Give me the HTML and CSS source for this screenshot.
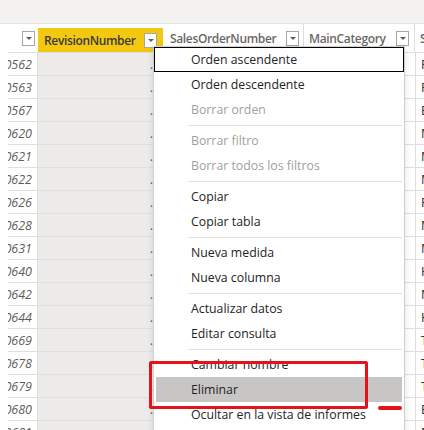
FILE: index.html
```html
<!DOCTYPE html>
<html lang="es">
<head>
<meta charset="utf-8">
<title>Tabla</title>
<link rel="stylesheet" href="styles.css">
</head>
<body>
<div class="top"></div>
<div class="sheet">
  <div class="table">
    <div class="row hdr">
      <div class="c c1"><span class="dd"></span></div>
      <div class="c c2 sel"><span class="hname">RevisionNumber</span><span class="dd"></span></div>
      <div class="c c3"><span class="hname">SalesOrderNumber</span><span class="dd"></span></div>
      <div class="c c4"><span class="hname">MainCategory</span><span class="dd"></span></div>
      <div class="c c5"><span class="hname">S</span></div>
    </div>
    <div class="row"><div class="c c1">50562</div><div class="c c2">.</div><div class="c c3"></div><div class="c c4"></div><div class="c c5">F</div></div>
    <div class="row"><div class="c c1">50563</div><div class="c c2">.</div><div class="c c3"></div><div class="c c4"></div><div class="c c5">F</div></div>
    <div class="row"><div class="c c1">50567</div><div class="c c2">.</div><div class="c c3"></div><div class="c c4"></div><div class="c c5">E</div></div>
    <div class="row"><div class="c c1">50620</div><div class="c c2">.</div><div class="c c3"></div><div class="c c4"></div><div class="c c5">M</div></div>
    <div class="row"><div class="c c1">50621</div><div class="c c2">.</div><div class="c c3"></div><div class="c c4"></div><div class="c c5">M</div></div>
    <div class="row"><div class="c c1">50622</div><div class="c c2">.</div><div class="c c3"></div><div class="c c4"></div><div class="c c5">M</div></div>
    <div class="row"><div class="c c1">50626</div><div class="c c2">.</div><div class="c c3"></div><div class="c c4"></div><div class="c c5">F</div></div>
    <div class="row"><div class="c c1">50628</div><div class="c c2">.</div><div class="c c3"></div><div class="c c4"></div><div class="c c5">M</div></div>
    <div class="row"><div class="c c1">50631</div><div class="c c2">.</div><div class="c c3"></div><div class="c c4"></div><div class="c c5">M</div></div>
    <div class="row"><div class="c c1">50640</div><div class="c c2">.</div><div class="c c3"></div><div class="c c4"></div><div class="c c5">H</div></div>
    <div class="row"><div class="c c1">50642</div><div class="c c2">.</div><div class="c c3"></div><div class="c c4"></div><div class="c c5">M</div></div>
    <div class="row"><div class="c c1">50644</div><div class="c c2">.</div><div class="c c3"></div><div class="c c4"></div><div class="c c5">H</div></div>
    <div class="row"><div class="c c1">50669</div><div class="c c2">.</div><div class="c c3"></div><div class="c c4"></div><div class="c c5">T</div></div>
    <div class="row"><div class="c c1">50678</div><div class="c c2">.</div><div class="c c3"></div><div class="c c4"></div><div class="c c5">T</div></div>
    <div class="row"><div class="c c1">50679</div><div class="c c2">.</div><div class="c c3"></div><div class="c c4"></div><div class="c c5">T</div></div>
    <div class="row"><div class="c c1">50680</div><div class="c c2">.</div><div class="c c3"></div><div class="c c4"></div><div class="c c5">E</div></div>
    <div class="row"><div class="c c1">50681</div><div class="c c2">.</div><div class="c c3"></div><div class="c c4"></div><div class="c c5">M</div></div>
  </div>

  <div class="menu">
    <div class="item focus">Orden ascendente</div>
    <div class="item">Orden descendente</div>
    <div class="item off">Borrar orden</div>
    <div class="sep"></div>
    <div class="item off">Borrar filtro</div>
    <div class="item off">Borrar todos los filtros</div>
    <div class="sep"></div>
    <div class="item">Copiar</div>
    <div class="item">Copiar tabla</div>
    <div class="sep"></div>
    <div class="item">Nueva medida</div>
    <div class="item">Nueva columna</div>
    <div class="sep"></div>
    <div class="item">Actualizar datos</div>
    <div class="item">Editar consulta</div>
    <div class="sep"></div>
    <div class="item">Cambiar nombre</div>
    <div class="item hover">Eliminar</div>
    <div class="item">Ocultar en la vista de informes</div>
  </div>

  <div class="mark-box"></div>
  <div class="mark-dash"></div>
</div>
</body>
</html>
```

FILE: styles.css
```css
html, body {
  margin: 0;
  padding: 0;
  background: #fff;
  overflow: hidden;
  height: 430px;
}

body {
  font-family: "Open Sans", "Noto Sans", "Liberation Sans", sans-serif;
  font-size: 12.5px;
  color: #252423;
}

.top {
  height: 23px;
  background: #f3f2f1;
  border-bottom: 1px solid #e6e5e4;
}

.sheet {
  position: relative;
  height: 406px;
  padding-left: 8px;
}

.table {
  overflow: hidden;
  height: 100%;
}

.row {
  display: grid;
  grid-template-columns: 30px 125px 141px 111px 1fr;
  height: 22px;
  border-bottom: 1px solid #e1dfdd;
}

.c {
  display: flex;
  align-items: center;
  overflow: hidden;
  white-space: nowrap;
  min-width: 0;
}

.row .c1 {
  justify-content: flex-end;
  padding-right: 5px;
  font-style: italic;
  color: #605e5c;
  border-right: 1px solid #e1dfdd;
  font-size: 12.5px;
}

.row .c2 {
  background: #edebe9;
  justify-content: flex-end;
  padding-right: 10px;
  color: #605e5c;
}

.row .c5 {
  padding-left: 5px;
  border-left: 1px solid #e1dfdd;
  color: #323130;
}

/* header */
.row.hdr {
  height: 28px;
  border-bottom: 1px solid #e1dfdd;
}

.hdr .c {
  padding: 0;
  font-weight: 600;
  font-size: 12px;
  letter-spacing: -0.35px;
  color: #6a6866;
  font-style: normal;
  background: #fff;
  border: 0;
}

.hdr .c1 {
  justify-content: flex-end;
  padding-right: 3px;
  border-right: 0;
}

.hdr .c2 {
  margin-top: 4px;
  padding: 0 6px 0 6px;
  justify-content: space-between;
  background: #f2c811;
  color: #3b3a39;
}

.hdr .c3 {
  padding: 0 4px 0 7px;
  justify-content: space-between;
  border-right: 1px solid #e1dfdd;
}

.hdr .c4 {
  padding: 0 5px 0 5px;
  justify-content: space-between;
  border-right: 1px solid #e1dfdd;
}

.hdr .c5 {
  padding-left: 5px;
}

.dd {
  flex: none;
  width: 11px;
  height: 13px;
  border: 1px solid #a8a6a4;
  background: #fff;
  position: relative;
}

.dd::after {
  content: "";
  position: absolute;
  left: 3px;
  top: 5px;
  border-left: 3px solid transparent;
  border-right: 3px solid transparent;
  border-top: 3px solid #605e5c;
}

/* menu */
.menu {
  position: absolute;
  left: 153px;
  top: 22px;
  width: 250px;
  height: 420px;
  background: #fff;
  border: 1px solid #d2d0ce;
  box-shadow: 0 2px 6px rgba(0, 0, 0, 0.12);
}

.item {
  height: 25px;
  line-height: 25px;
  padding-left: 37px;
  font-size: 12.3px;
  color: #252423;
  white-space: nowrap;
}

.item.off {
  color: #a19f9d;
}

.item.focus {
  box-shadow: inset 0 0 0 1px #000;
}

.item.hover {
  background: #c8c6c4;
  box-shadow: inset 2px 0 #fff, inset -2px 0 #fff;
}

.sep {
  height: 6px;
  position: relative;
}

.sep::after {
  content: "";
  position: absolute;
  left: 34px;
  right: 2px;
  top: 3px;
  height: 1px;
  background: #e1dfdd;
}

/* annotations */
.mark-box {
  position: absolute;
  left: 149px;
  top: 337px;
  width: 213px;
  height: 42px;
  border: 3px solid #e3131b;
  border-radius: 2px;
}

.mark-dash {
  position: absolute;
  left: 378px;
  top: 382px;
  width: 24px;
  height: 4px;
  border-radius: 2px;
  background: #e3131b;
}
```
